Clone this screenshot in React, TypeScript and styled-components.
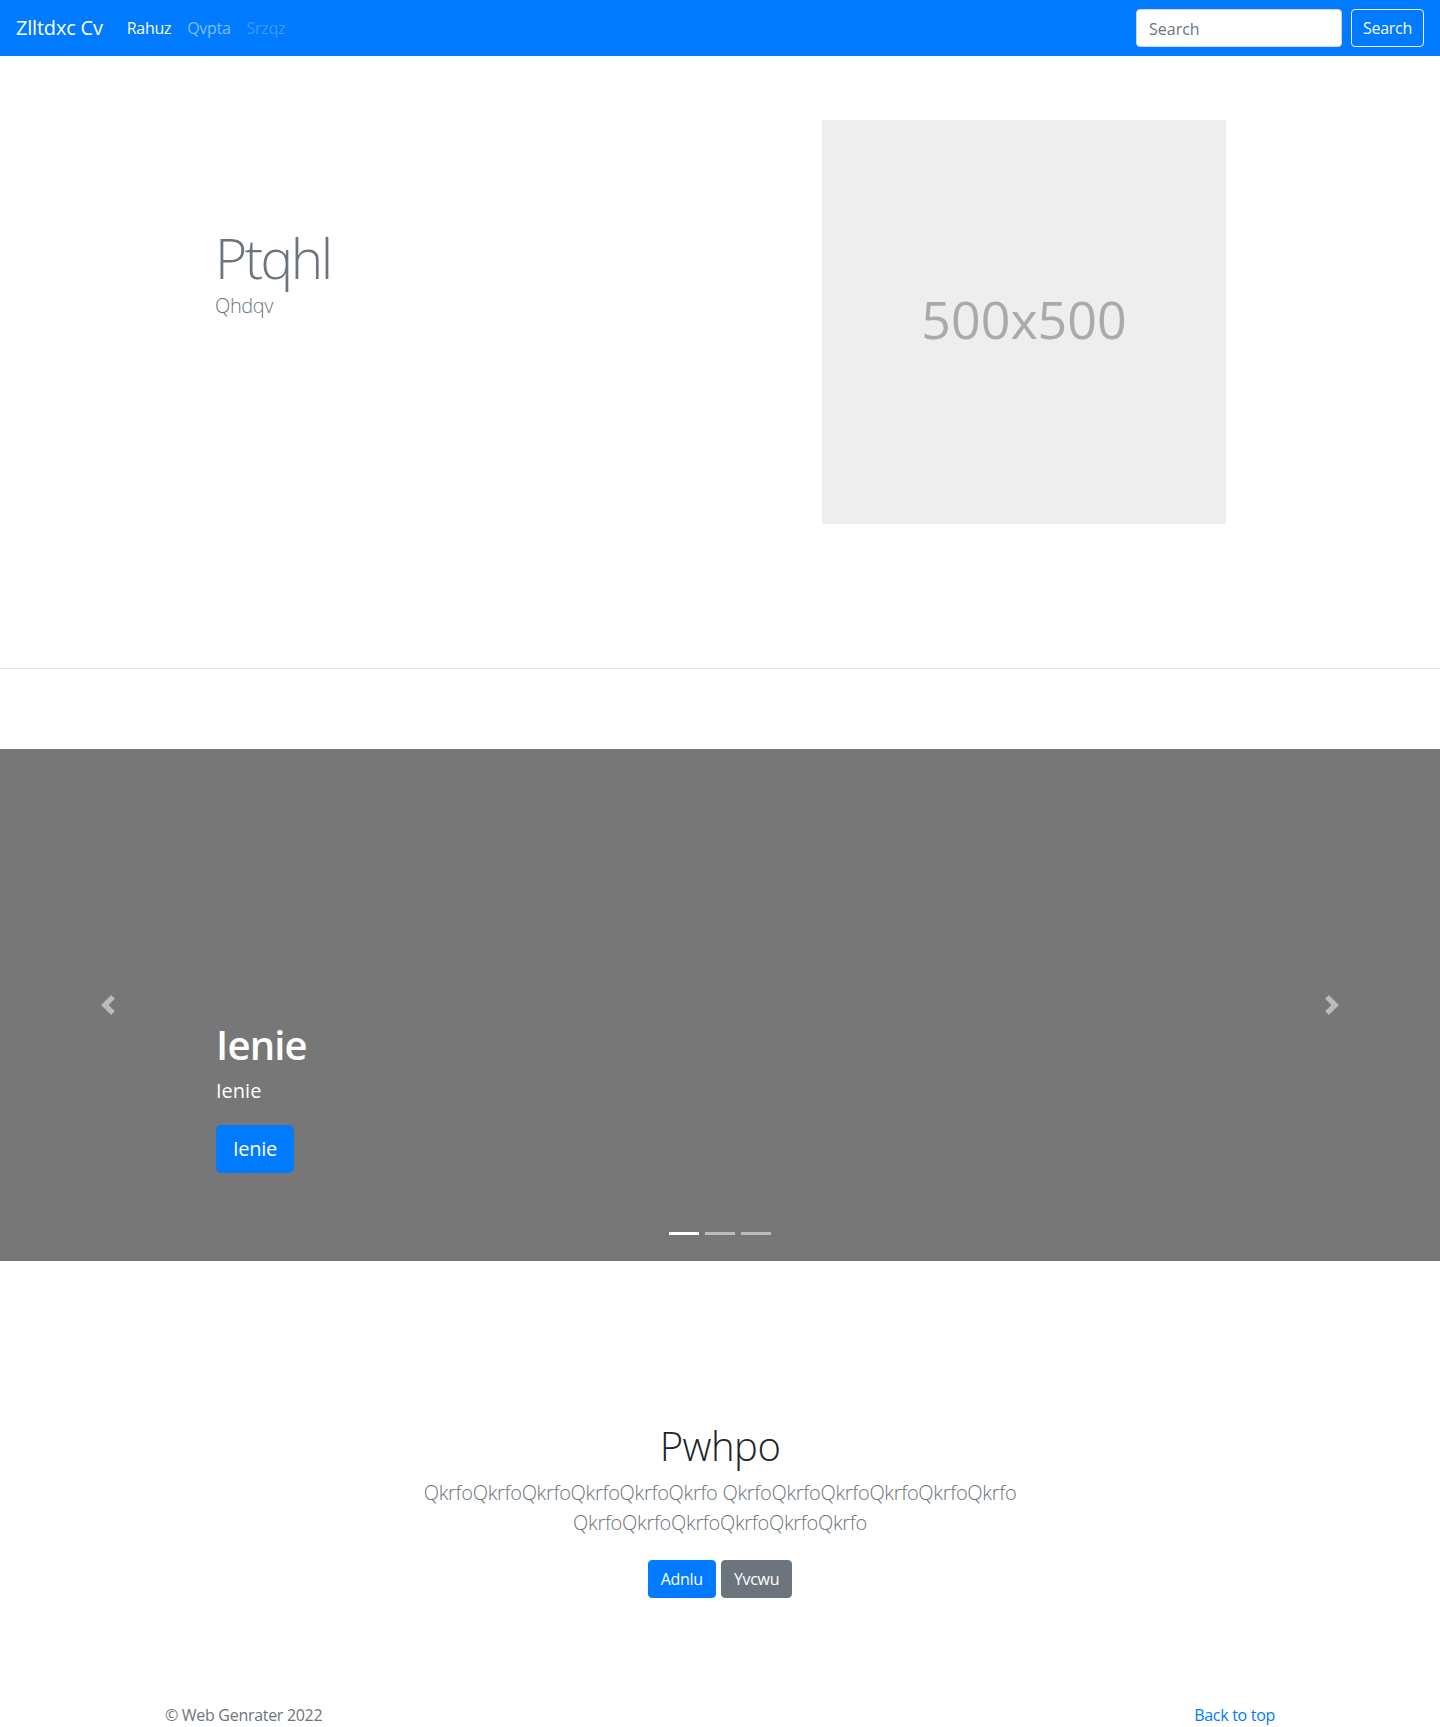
import React from "react";
import styled, { createGlobalStyle } from "styled-components";

const GlobalStyle = createGlobalStyle`
  *, *::before, *::after { box-sizing: border-box; }
  html, body { margin: 0; padding: 0; overflow: hidden; }
  body {
    font-family: "Open Sans", "Noto Sans", sans-serif;
    font-size: 16px;
    line-height: 1.5;
    color: #212529;
    background: #fff;
  }
`;

const Page = styled.div`
  width: 1440px;
  height: 1727px;
  display: flex;
  flex-direction: column;
`;

/* ---------- Navbar ---------- */
const Navbar = styled.nav`
  height: 56px;
  background: #007bff;
  padding: 8px 16px;
  display: flex;
  align-items: center;
`;

const Brand = styled.a`
  font-size: 20px;
  line-height: 30px;
  padding: 5px 0;
  margin-right: 16px;
  color: #fff;
  text-decoration: none;
  white-space: nowrap;
  letter-spacing: -0.2px;
`;

const NavList = styled.ul`
  display: flex;
  list-style: none;
  margin: 0;
  padding: 0;
  flex: 1;
`;

const NavLink = styled.a<{ $state: "active" | "normal" | "disabled" }>`
  display: block;
  padding: 8px;
  font-size: 16px;
  line-height: 24px;
  letter-spacing: -0.3px;
  text-decoration: none;
  color: ${(p) =>
    p.$state === "active"
      ? "#fff"
      : p.$state === "normal"
      ? "rgba(255,255,255,.5)"
      : "rgba(255,255,255,.25)"};
`;

const SearchForm = styled.form`
  display: flex;
  align-items: center;
  gap: 9px;
  margin: 0;
`;

const SearchInput = styled.input`
  width: 206px;
  height: 38px;
  padding: 7px 12px 5px;
  font-family: inherit;
  font-size: 16px;
  color: #495057;
  background: #fff;
  border: 1px solid #ced4da;
  border-radius: 4px;
  &::placeholder { color: #6c757d; }
`;

const OutlineButton = styled.button`
  width: 73px;
  height: 38px;
  padding: 0;
  font-family: inherit;
  font-size: 16px;
  line-height: 24px;
  letter-spacing: -0.3px;
  color: #f8f9fa;
  background: transparent;
  border: 1px solid #f8f9fa;
  border-radius: 4px;
`;

/* ---------- Hero ---------- */
const Hero = styled.section`
  display: grid;
  grid-template-columns: 720px 720px;
  padding: 64px 0 144px;
`;

const HeroText = styled.div`
  padding: 104px 0 0 215px;
`;

const HeroTitle = styled.h1`
  margin: 0;
  font-size: 55px;
  font-weight: 300;
  line-height: 67px;
  letter-spacing: -2.5px;
  color: #6c757d;
`;

const Lead = styled.p`
  margin: 0;
  font-size: 20px;
  font-weight: 300;
  line-height: 30px;
  color: #6c757d;
`;

const HeroLead = styled(Lead)`
  letter-spacing: -0.4px;
`;

const HeroMedia = styled.div`
  padding-left: 102px;
`;

const Placeholder = styled.div`
  width: 404px;
  height: 404px;
  background: #eeeeee;
  display: flex;
  align-items: center;
  justify-content: center;
  padding-bottom: 6px;
  color: #aaaaaa;
  font-size: 52px;
  line-height: 1;
`;

const Divider = styled.hr`
  margin: 0 0 80px;
  border: 0;
  border-top: 1px solid rgba(0, 0, 0, 0.1);
`;

/* ---------- Carousel ---------- */
const Carousel = styled.section`
  position: relative;
  height: 512px;
  background: #777777;
  display: flex;
  align-items: flex-end;
  padding: 0 216px 48px;
`;

const Caption = styled.div`
  padding: 20px 0;
  color: #fff;
`;

const CaptionTitle = styled.h1`
  margin: 0 0 8px;
  font-size: 40px;
  font-weight: 600;
  line-height: 48px;
  letter-spacing: -0.8px;
`;

const CaptionText = styled.p`
  margin: 0 0 20px;
  font-size: 20px;
  line-height: 28px;
`;

const ButtonRow = styled.div<{ $center?: boolean; $spaced?: boolean }>`
  display: flex;
  gap: 5px;
  justify-content: ${(p) => (p.$center ? "center" : "flex-start")};
  margin-bottom: ${(p) => (p.$spaced ? "20px" : "0")};
`;

const Button = styled.a<{ $variant: "primary" | "secondary"; $large?: boolean }>`
  display: inline-flex;
  align-items: center;
  justify-content: center;
  height: ${(p) => (p.$large ? "48px" : "38px")};
  padding: ${(p) => (p.$large ? "0 16px" : "0 12px")};
  font-size: ${(p) => (p.$large ? "20px" : "16px")};
  letter-spacing: -0.3px;
  border-radius: ${(p) => (p.$large ? "5px" : "4px")};
  color: #fff;
  text-decoration: none;
  background: ${(p) => (p.$variant === "primary" ? "#007bff" : "#6c757d")};
  border: 1px solid ${(p) => (p.$variant === "primary" ? "#007bff" : "#6c757d")};
`;

const Control = styled.a<{ $side: "prev" | "next" }>`
  position: absolute;
  top: 0;
  bottom: 0;
  ${(p) => (p.$side === "prev" ? "left: 0;" : "right: 0;")}
  width: 15%;
  display: flex;
  align-items: center;
  justify-content: center;
  opacity: 0.5;
`;

const Indicators = styled.ol`
  position: absolute;
  left: 0;
  right: 0;
  bottom: 26px;
  margin: 0;
  padding: 0;
  list-style: none;
  display: flex;
  justify-content: center;
  gap: 6px;
`;

const Indicator = styled.li<{ $active?: boolean }>`
  width: 30px;
  height: 3px;
  background: #fff;
  opacity: ${(p) => (p.$active ? 1 : 0.5)};
`;

/* ---------- Marketing ---------- */
const Jumbo = styled.section`
  padding-top: 161px;
  display: flex;
  flex-direction: column;
  align-items: center;
  text-align: center;
`;

const JumboInner = styled.div`
  width: 640px;
`;

const JumboTitle = styled.h1`
  margin: 0 0 8px;
  font-size: 40px;
  font-weight: 300;
  line-height: 48px;
  letter-spacing: -0.5px;
  color: #212529;
`;

const JumboLead = styled(Lead)`
  letter-spacing: -0.3px;
`;

const JumboActions = styled.div`
  margin-top: 22px;
`;

/* ---------- Footer ---------- */
const Footer = styled.footer`
  margin-top: auto;
  width: 1110px;
  align-self: center;
  display: flex;
  justify-content: space-between;
  color: #6c757d;
  padding-bottom: 0;
`;

const FooterText = styled.p`
  margin: 0;
  font-size: 16px;
  line-height: 24px;
  letter-spacing: -0.3px;
`;

const FooterLink = styled.a`
  color: #007bff;
  text-decoration: none;
  font-size: 16px;
  line-height: 24px;
  letter-spacing: -0.3px;
`;

const Chevron = ({ dir }: { dir: "left" | "right" }) => (
  <svg width="20" height="20" viewBox="0 0 8 8" fill="#fff">
    {dir === "left" ? (
      <path d="M5.25 0l-4 4 4 4 1.5-1.5L4.25 4l2.5-2.5L5.25 0z" />
    ) : (
      <path d="M2.75 0l-1.5 1.5L3.75 4l-2.5 2.5L2.75 8l4-4-4-4z" />
    )}
  </svg>
);

export default function App() {
  const words = "QkrfoQkrfoQkrfoQkrfoQkrfoQkrfo";
  return (
    <>
      <GlobalStyle />
      <Page>
        <Navbar>
          <Brand href="#">Zlltdxc Cv</Brand>
          <NavList>
            <li><NavLink $state="active" href="#">Rahuz</NavLink></li>
            <li><NavLink $state="normal" href="#">Qvpta</NavLink></li>
            <li><NavLink $state="disabled" href="#">Srzqz</NavLink></li>
          </NavList>
          <SearchForm onSubmit={(e) => e.preventDefault()}>
            <SearchInput type="text" placeholder="Search" />
            <OutlineButton type="submit">Search</OutlineButton>
          </SearchForm>
        </Navbar>

        <Hero>
          <HeroText>
            <HeroTitle>Ptqhl</HeroTitle>
            <HeroLead>Qhdqv</HeroLead>
          </HeroText>
          <HeroMedia>
            <Placeholder>500x500</Placeholder>
          </HeroMedia>
        </Hero>

        <Divider />

        <Carousel>
          <Caption>
            <CaptionTitle>Ienie</CaptionTitle>
            <CaptionText>Ienie</CaptionText>
            <ButtonRow $spaced>
              <Button $variant="primary" $large href="#">Ienie</Button>
            </ButtonRow>
          </Caption>
          <Control $side="prev" href="#"><Chevron dir="left" /></Control>
          <Control $side="next" href="#"><Chevron dir="right" /></Control>
          <Indicators>
            <Indicator $active />
            <Indicator />
            <Indicator />
          </Indicators>
        </Carousel>

        <Jumbo>
          <JumboInner>
            <JumboTitle>Pwhpo</JumboTitle>
            <JumboLead>
              {words} {words} {words}
            </JumboLead>
            <JumboActions>
              <ButtonRow $center>
                <Button $variant="primary" href="#">Adnlu</Button>
                <Button $variant="secondary" href="#">Yvcwu</Button>
              </ButtonRow>
            </JumboActions>
          </JumboInner>
        </Jumbo>

        <Footer>
          <FooterText>© Web Genrater 2022</FooterText>
          <FooterLink href="#">Back to top</FooterLink>
        </Footer>
      </Page>
    </>
  );
}
